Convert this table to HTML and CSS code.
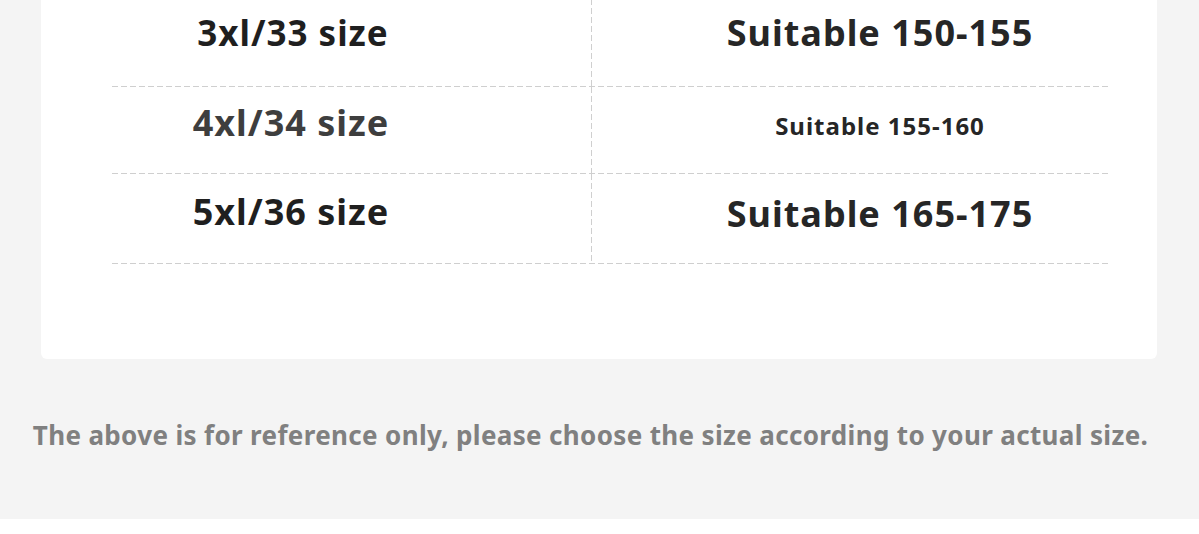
FILE: index.html
```html
<!DOCTYPE html>
<html lang="en">
<head>
<meta charset="utf-8">
<title>Size chart</title>
<link rel="stylesheet" href="styles.css">
</head>
<body>
<div class="page">
  <div class="card">
    <div class="table">
      <div class="row r1">
        <div class="cell left c-dark">3xl/33 size</div>
        <div class="cell right">Suitable 150-155</div>
      </div>
      <div class="row r2">
        <div class="cell left c-grey big">4xl/34 size</div>
        <div class="cell right small">Suitable 155-160</div>
      </div>
      <div class="row r3">
        <div class="cell left c-dark big">5xl/36 size</div>
        <div class="cell right">Suitable 165-175</div>
      </div>
    </div>
  </div>
  <p class="note">The above is for reference only, please choose the size according to your actual size.</p>
</div>
</body>
</html>
```

FILE: styles.css
```css
html, body {
  margin: 0;
  padding: 0;
  background: #ffffff;
}
body {
  font-family: "Noto Sans", "Open Sans", "DejaVu Sans", sans-serif;
  font-weight: 700;
}
.page {
  background: #f4f4f4;
  height: 519px;
  display: flex;
  flex-direction: column;
}
.card {
  background: #ffffff;
  height: 359px;
  margin: 0 42px 0 41px;
  border-radius: 0 0 6px 6px;
  box-sizing: border-box;
  padding-left: 71px;
}
.table {
  width: 996px;
  margin-top: -1px;
}
.row {
  display: grid;
  grid-template-columns: 479px 517px;
  background-image: repeating-linear-gradient(to right, #cfcfcf 0 6px, transparent 6px 9px);
  background-size: 100% 1px;
  background-position: left bottom;
  background-repeat: no-repeat;
}
.r1 { height: 88px; }
.r2 { height: 87px; }
.r3 { height: 90px; }
.cell {
  display: flex;
  align-items: center;
  justify-content: center;
  padding-bottom: 21px;
  box-sizing: border-box;
  white-space: nowrap;
  font-size: 35px;
  letter-spacing: 1px;
}
.left {
  padding-right: 117px;
}
.left.big {
  font-size: 36px;
  padding-right: 121px;
}
.right {
  padding-left: 61px;
  font-size: 36px;
  color: #262626;
  background-image: repeating-linear-gradient(to bottom, #cfcfcf 0 6px, transparent 6px 9px);
  background-size: 1px 100%;
  background-position: left top;
  background-repeat: no-repeat;
}
.right.small {
  font-size: 24px;
  letter-spacing: 1px;
}
.r1 .left { padding-bottom: 22px; }
.r2 .left { padding-bottom: 16px; }
.r2 .right { padding-bottom: 10px; }
.r3 .left { padding-bottom: 15px; }
.r3 .right { padding-bottom: 12px; }
.c-dark { color: #1f1f1f; }
.c-grey { color: #3e3e3e; }
.note {
  margin: 0;
  padding-top: 58px;
  padding-right: 18px;
  text-align: center;
  font-size: 26px;
  color: #808080;
  letter-spacing: 0.35px;
  white-space: nowrap;
}
```
